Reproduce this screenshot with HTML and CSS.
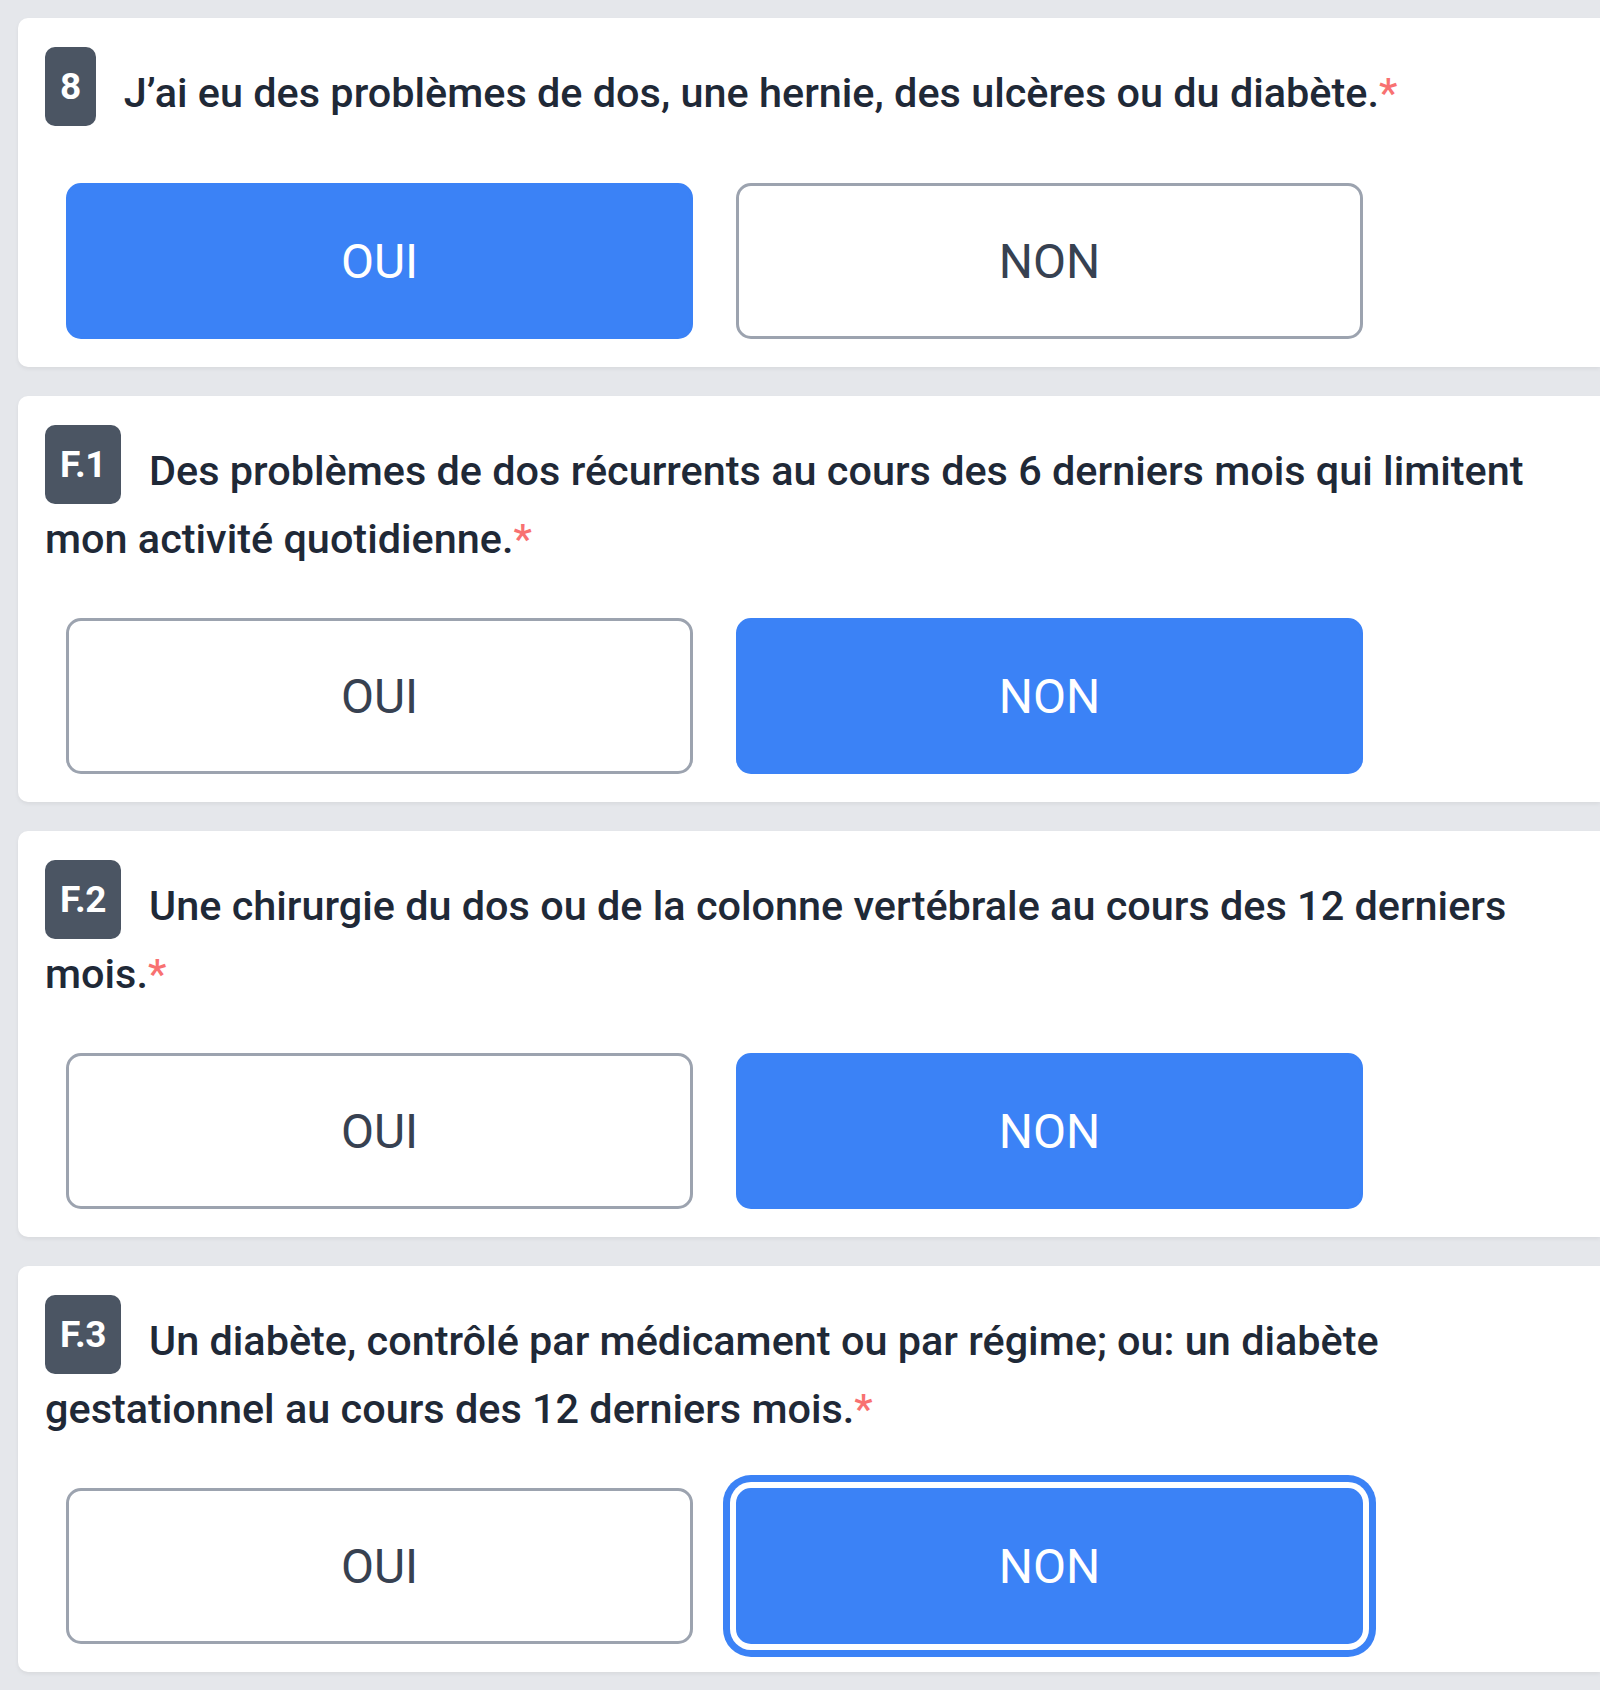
FILE: index.html
```html
<!DOCTYPE html>
<html>
<head>
    <meta charset="UTF-8">
    <title>Questionnaire</title>
    <link rel="stylesheet" href="styles.css">
</head>
<body>
<div class="survey">
    <div class="card">
        <p class="question"><span class="num">8</span>J’ai eu des problèmes de dos, une hernie, des ulcères ou du diabète.<span class="req">*</span></p>
        <div class="choices">
            <button class="choice active">OUI</button>
            <button class="choice">NON</button>
        </div>
    </div>
    <div class="card">
        <p class="question"><span class="num">F.1</span>Des problèmes de dos récurrents au cours des 6 derniers mois qui limitent mon activité quotidienne.<span class="req">*</span></p>
        <div class="choices">
            <button class="choice">OUI</button>
            <button class="choice active">NON</button>
        </div>
    </div>
    <div class="card">
        <p class="question"><span class="num">F.2</span>Une chirurgie du dos ou de la colonne vertébrale au cours des 12 derniers mois.<span class="req">*</span></p>
        <div class="choices">
            <button class="choice">OUI</button>
            <button class="choice active">NON</button>
        </div>
    </div>
    <div class="card">
        <p class="question"><span class="num">F.3</span>Un diabète, contrôlé par médicament ou par régime; ou: un diabète gestationnel au cours des 12 derniers mois.<span class="req">*</span></p>
        <div class="choices">
            <button class="choice">OUI</button>
            <button class="choice active focus">NON</button>
        </div>
    </div>
</div>
</body>
</html>
```

FILE: styles.css
```css
* {
    margin: 0;
    padding: 0;
    box-sizing: border-box;
}

body {
    background: #e5e7eb;
    font-family: Roboto, "Liberation Sans", sans-serif;
    overflow: hidden;
}

.survey {
    display: flex;
    flex-direction: column;
    gap: 29px;
    padding: 18px 0 18px 18px;
}

.card {
    background: #fff;
    border-radius: 10px 0 0 10px;
    padding: 29px 27px 28px 27px;
    box-shadow: 0 2px 4px rgba(0, 0, 0, 0.06);
}

.question {
    min-height: 91px;
    font-size: 41.4px;
    font-weight: 500;
    line-height: 68px;
    color: #1f2937;
}

.question .num {
    display: inline-block;
    height: 79px;
    padding: 0 15px;
    margin-right: 28px;
    border-radius: 10px;
    background: #4b5563;
    color: #fff;
    font-size: 37px;
    font-weight: 700;
    line-height: 79px;
    letter-spacing: -0.5px;
    vertical-align: 8px;
}

.question .req {
    color: #f87171;
}

.choices {
    display: flex;
    gap: 43px;
    margin: 45px 0 0 21px;
}

.choice {
    width: 627px;
    height: 156px;
    border: 3px solid #9ca3af;
    border-radius: 15px;
    background: #fff;
    color: #374151;
    font-family: Roboto, "Liberation Sans", sans-serif;
    font-size: 48px;
    font-weight: 400;
    cursor: pointer;
}

.choice.active {
    background: #3b82f6;
    border-color: #3b82f6;
    color: #fff;
}

.choice.focus {
    box-shadow: 0 0 0 6px #fff, 0 0 0 13px #3b82f6;
}
```
